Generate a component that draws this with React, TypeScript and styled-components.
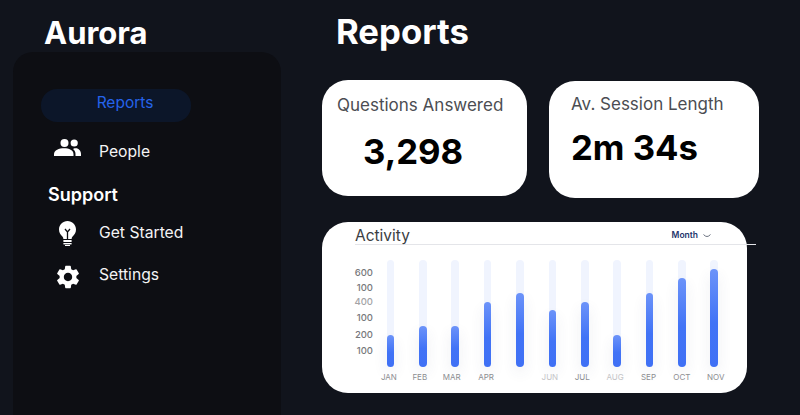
import { MdSettings } from "react-icons/md";
import styled, { createGlobalStyle } from "styled-components";

const GlobalStyle = createGlobalStyle`
    html, body {
        margin: 0;
        padding: 0;
        background: #11141c;
        font-family: Inter, "Liberation Sans", sans-serif;
    }
`;

const Page = styled.div`
    display: flex;
    width: 800px;
    height: 415px;
    overflow: hidden;
    background: #11141c;
`;

const Sidebar = styled.aside`
    display: flex;
    flex-direction: column;
    flex: 0 0 322px;
    padding-left: 13px;
    box-sizing: border-box;
`;

const Brand = styled.h1`
    margin: 0;
    padding: 14px 0 0 31px;
    height: 39px;
    font-size: 31px;
    line-height: 38px;
    font-weight: 700;
    color: #fff;
`;

const Panel = styled.nav`
    display: flex;
    flex-direction: column;
    width: 268px;
    height: 400px;
    flex: none;
    padding: 37px 0 0 28px;
    box-sizing: border-box;
    background: #0d0e13;
    border-radius: 20px;
`;

const ActivePill = styled.div`
    width: 150px;
    height: 33px;
    padding: 4px 0 0 18px;
    box-sizing: border-box;
    border-radius: 16px;
    background: #0c1629;
    color: #2563eb;
    font-size: 15.5px;
    line-height: 20px;
    font-weight: 400;
    text-align: center;
`;

const NavRow = styled.div<{ $top: number }>`
    display: flex;
    align-items: center;
    height: 30px;
    margin-top: ${(p) => p.$top}px;
    color: #f4f4f5;
    font-size: 15.7px;
    font-weight: 400;
`;

const NavIcon = styled.span<{ $shift: number }>`
    display: flex;
    justify-content: center;
    width: 53px;
    margin-right: 5px;
    margin-top: ${(p) => p.$shift}px;
    font-size: 28px;
    color: #fff;
`;

const SectionTitle = styled.div`
    margin: 17px 0 0 7px;
    height: 24px;
    color: #fff;
    font-size: 18px;
    line-height: 24px;
    font-weight: 600;
`;

const Main = styled.main`
    display: flex;
    flex-direction: column;
    flex: 1;
    min-width: 0;
`;

const Title = styled.h2`
    margin: 8px 0 0 14px;
    height: 46px;
    font-size: 34.7px;
    line-height: 46px;
    font-weight: 700;
    color: #fff;
`;

const StatRow = styled.div`
    display: flex;
    align-items: flex-start;
    gap: 22px;
    margin-top: 26px;
`;

const StatCard = styled.section<{ $width: number; $height: number; $top: number }>`
    width: ${(p) => p.$width}px;
    height: ${(p) => p.$height}px;
    margin-top: ${(p) => p.$top}px;
    background: #fff;
    border-radius: 26px;
    box-sizing: border-box;
`;

const StatLabel = styled.div<{ $left: number; $top: number }>`
    margin: ${(p) => p.$top}px 0 0 ${(p) => p.$left}px;
    color: #4b4d52;
    font-size: 17px;
    line-height: 22px;
`;

const StatValue = styled.div<{ $left: number; $top: number }>`
    margin: ${(p) => p.$top}px 0 0 ${(p) => p.$left}px;
    color: #000;
    font-size: 34.7px;
    line-height: 42px;
    font-weight: 700;
`;

const ChartCard = styled.section`
    width: 425px;
    height: 171px;
    margin-top: 24px;
    background: #fff;
    border-radius: 26px;
    flex: none;
`;

const ChartHeader = styled.header`
    display: flex;
    align-items: flex-end;
    justify-content: space-between;
    height: 22px;
    margin: 0 -9px 0 33px;
    padding-right: 45px;
    border-bottom: 1px solid #e4e5e9;
`;

const ChartTitle = styled.span`
    color: #3b3d42;
    font-size: 15.5px;
    line-height: 17px;
`;

const RangeSelect = styled.span`
    display: flex;
    align-items: center;
    gap: 5px;
    height: 18px;
    color: #22346b;
    font-size: 8.5px;
    font-weight: 600;
`;

const Chevron = styled.svg`
    width: 8px;
    height: 4px;
    margin-top: 2px;
    fill: none;
    stroke: #6b7280;
    stroke-width: 1;
`;

const ChartBody = styled.div`
    display: flex;
    margin: 15px 0 0 32px;
`;

const Axis = styled.div`
    display: flex;
    flex-direction: column;
    align-items: flex-end;
    width: 19px;
    margin-right: 1.2px;
`;

const AxisLabel = styled.span<{ $top: number; $faint?: boolean }>`
    margin-top: ${(p) => p.$top}px;
    height: 12px;
    color: ${(p) => (p.$faint ? "#a3a3a6" : "#77787c")};
    font-size: 9.5px;
    line-height: 12px;
    font-weight: 500;
`;

const Columns = styled.div`
    display: flex;
`;

const Column = styled.div`
    display: flex;
    flex-direction: column;
    align-items: center;
    width: 32.4px;
`;

const Track = styled.div`
    display: flex;
    align-items: flex-end;
    width: 7.6px;
    height: 107px;
    border-radius: 4px;
    background: #f0f4fe;
`;

const Fill = styled.div`
    width: 100%;
    border-radius: 4px;
    background: linear-gradient(180deg, #6c93f9 0%, #4173f6 55%, #3f70f5 100%);
    box-shadow: 0 6px 14px rgba(60, 70, 110, 0.1);
`;

const MonthLabel = styled.span<{ $nudge: number; $faint?: boolean }>`
    margin: 4px 0 0 ${(p) => p.$nudge}px;
    height: 12px;
    color: ${(p) => (p.$faint ? "#c4c4c7" : "#8c8d91")};
    font-size: 8px;
    line-height: 12px;
    font-weight: 400;
    white-space: nowrap;
`;

const axis = [
    { value: "600", top: 7 },
    { value: "100", top: 3 },
    { value: "400", top: 2, faint: true },
    { value: "100", top: 4 },
    { value: "200", top: 5 },
    { value: "100", top: 4 },
];

const months = [
    { name: "JAN", height: 32, nudge: -3 },
    { name: "FEB", height: 41, nudge: -6 },
    { name: "MAR", height: 41, nudge: -7 },
    { name: "APR", height: 65, nudge: -3 },
    { name: "", height: 74, nudge: 0 },
    { name: "JUN", height: 57, nudge: -5, faint: true },
    { name: "JUL", height: 65, nudge: -5 },
    { name: "AUG", height: 32, nudge: -4, faint: true },
    { name: "SEP", height: 74, nudge: -2 },
    { name: "OCT", height: 89, nudge: 0 },
    { name: "NOV", height: 98, nudge: 3 },
];

const PeopleIcon = () => (
    <svg width="27" height="18" viewBox="0 0 27 18" fill="#fff">
        <circle cx="10.5" cy="4" r="4" />
        <circle cx="20.2" cy="4" r="3.6" />
        <path d="M0 17V15C0 11 5 9.2 10 9.2C15 9.2 19.5 11 19.5 15V17Z" />
        <path d="M21.5 17V15C21.5 12.7 20.6 11.1 19 9.9C20 9.4 21 9.3 22 9.3C24.6 9.3 27 12 27 15V17Z" />
    </svg>
);

const BulbIcon = () => (
    <svg width="17" height="25" viewBox="0 0 17 25" fill="#fff">
        <path d="M8.5 0C3.8 0 0 3.8 0 8.4C0 11.5 1.6 13.6 3.2 15.3C4 16.2 4.4 17 4.4 18H12.6C12.6 17 13 16.2 13.8 15.3C15.4 13.6 17 11.5 17 8.4C17 3.8 13.2 0 8.5 0Z" />
        <path d="M6 8L8.5 11L11 8M8.5 11V18" fill="none" stroke="#0d0e13" strokeWidth="1.3" />
        <rect x="4.4" y="19" width="8.2" height="2" />
        <rect x="4.4" y="22" width="8.2" height="1.4" />
        <rect x="6" y="24" width="5" height="1" />
    </svg>
);

export default function App() {
    return (
        <Page>
            <GlobalStyle />
            <Sidebar>
                <Brand>Aurora</Brand>
                <Panel>
                    <ActivePill>Reports</ActivePill>
                    <NavRow $top={14}>
                        <NavIcon $shift={-6}>
                            <PeopleIcon />
                        </NavIcon>
                        People
                    </NavRow>
                    <SectionTitle>Support</SectionTitle>
                    <NavRow $top={10}>
                        <NavIcon $shift={3}>
                            <BulbIcon />
                        </NavIcon>
                        Get Started
                    </NavRow>
                    <NavRow $top={12}>
                        <NavIcon $shift={6}>
                            <MdSettings />
                        </NavIcon>
                        Settings
                    </NavRow>
                </Panel>
            </Sidebar>
            <Main>
                <Title>Reports</Title>
                <StatRow>
                    <StatCard $width={205} $height={116} $top={0}>
                        <StatLabel $left={15} $top={14}>
                            Questions Answered
                        </StatLabel>
                        <StatValue $left={41} $top={14}>
                            3,298
                        </StatValue>
                    </StatCard>
                    <StatCard $width={210} $height={117} $top={1}>
                        <StatLabel $left={22} $top={12}>
                            Av. Session Length
                        </StatLabel>
                        <StatValue $left={22} $top={11}>
                            2m 34s
                        </StatValue>
                    </StatCard>
                </StatRow>
                <ChartCard>
                    <ChartHeader>
                        <ChartTitle>Activity</ChartTitle>
                        <RangeSelect>
                            Month
                            <Chevron viewBox="0 0 8 4">
                                <path d="M0.5 0.5 Q4 4.5 7.5 0.5" />
                            </Chevron>
                        </RangeSelect>
                    </ChartHeader>
                    <ChartBody>
                        <Axis>
                            {axis.map((tick, index) => (
                                <AxisLabel key={index} $top={tick.top} $faint={tick.faint}>
                                    {tick.value}
                                </AxisLabel>
                            ))}
                        </Axis>
                        <Columns>
                            {months.map((month, index) => (
                                <Column key={index}>
                                    <Track>
                                        <Fill style={{ height: month.height }} />
                                    </Track>
                                    <MonthLabel $nudge={month.nudge} $faint={month.faint}>
                                        {month.name}
                                    </MonthLabel>
                                </Column>
                            ))}
                        </Columns>
                    </ChartBody>
                </ChartCard>
            </Main>
        </Page>
    );
}
